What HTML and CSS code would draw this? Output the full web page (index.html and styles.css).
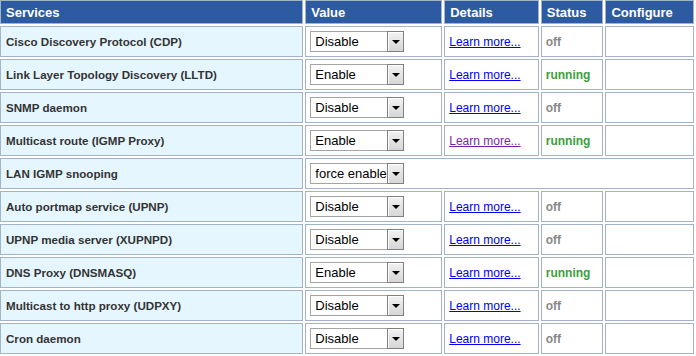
FILE: index.html
```html
<!DOCTYPE html>
<html lang="en">
<head>
    <meta charset="UTF-8">
    <title>Services</title>
    <link rel="stylesheet" href="styles.css">
</head>
<body>
    <table class="services">
        <thead>
            <tr>
                <th class="col-name">Services</th>
                <th class="col-value">Value</th>
                <th class="col-details">Details</th>
                <th class="col-status">Status</th>
                <th class="col-config">Configure</th>
            </tr>
        </thead>
        <tbody>
            <tr>
                <td class="name">Cisco Discovery Protocol (CDP)</td>
                <td><span class="select"><span class="select-text">Disable</span><span class="select-btn"><i></i></span></span></td>
                <td class="details"><a href="#">Learn more...</a></td>
                <td class="status off">off</td>
                <td></td>
            </tr>
            <tr>
                <td class="name">Link Layer Topology Discovery (LLTD)</td>
                <td><span class="select"><span class="select-text">Enable</span><span class="select-btn"><i></i></span></span></td>
                <td class="details"><a href="#">Learn more...</a></td>
                <td class="status on">running</td>
                <td></td>
            </tr>
            <tr>
                <td class="name">SNMP daemon</td>
                <td><span class="select"><span class="select-text">Disable</span><span class="select-btn"><i></i></span></span></td>
                <td class="details"><a href="#">Learn more...</a></td>
                <td class="status off">off</td>
                <td></td>
            </tr>
            <tr>
                <td class="name">Multicast route (IGMP Proxy)</td>
                <td><span class="select"><span class="select-text">Enable</span><span class="select-btn"><i></i></span></span></td>
                <td class="details"><a href="#" class="visited">Learn more...</a></td>
                <td class="status on">running</td>
                <td></td>
            </tr>
            <tr>
                <td class="name">LAN IGMP snooping</td>
                <td colspan="4"><span class="select"><span class="select-text">force enable</span><span class="select-btn"><i></i></span></span></td>
            </tr>
            <tr>
                <td class="name">Auto portmap service (UPNP)</td>
                <td><span class="select"><span class="select-text">Disable</span><span class="select-btn"><i></i></span></span></td>
                <td class="details"><a href="#">Learn more...</a></td>
                <td class="status off">off</td>
                <td></td>
            </tr>
            <tr>
                <td class="name">UPNP media server (XUPNPD)</td>
                <td><span class="select"><span class="select-text">Disable</span><span class="select-btn"><i></i></span></span></td>
                <td class="details"><a href="#">Learn more...</a></td>
                <td class="status off">off</td>
                <td></td>
            </tr>
            <tr>
                <td class="name">DNS Proxy (DNSMASQ)</td>
                <td><span class="select"><span class="select-text">Enable</span><span class="select-btn"><i></i></span></span></td>
                <td class="details"><a href="#">Learn more...</a></td>
                <td class="status on">running</td>
                <td></td>
            </tr>
            <tr>
                <td class="name">Multicast to http proxy (UDPXY)</td>
                <td><span class="select"><span class="select-text">Disable</span><span class="select-btn"><i></i></span></span></td>
                <td class="details"><a href="#">Learn more...</a></td>
                <td class="status off">off</td>
                <td></td>
            </tr>
            <tr>
                <td class="name">Cron daemon</td>
                <td><span class="select"><span class="select-text">Disable</span><span class="select-btn"><i></i></span></span></td>
                <td class="details"><a href="#">Learn more...</a></td>
                <td class="status off">off</td>
                <td></td>
            </tr>
        </tbody>
    </table>
</body>
</html>
```

FILE: styles.css
```css
body {
    margin: 0;
    font-family: "Liberation Sans", Arial, sans-serif;
    background: #fff;
    color: #333;
}
.services {
    border-collapse: separate;
    border-spacing: 2px;
    margin: -2px 0 0 -2px;
}
th,
td {
    border: 1px solid #a3b3c8;
    padding: 0 4px;
    text-align: left;
    white-space: nowrap;
    overflow: hidden;
}
th {
    height: 22px;
    padding: 0 5px;
    background: #2d5ba2;
    color: #fff;
    font-size: 13px;
    font-weight: bold;
}
.col-name { width: 294px; }
.col-value { width: 126px; }
.col-details { width: 83px; }
.col-status { width: 51px; }
.col-config { width: 77px; }
td {
    height: 29px;
    font-size: 12px;
}
td.name {
    padding-left: 5px;
    background: #e6f6ff;
    font-weight: bold;
    font-size: 11.6px;
    color: #333;
}
.details a {
    color: #0000ee;
    text-decoration: underline;
}
.details a.visited {
    color: #7b1fa2;
}
.status {
    font-weight: bold;
}
.status.off {
    color: #888;
}
.status.on {
    color: #3c9f3c;
}
.select {
    display: inline-flex;
    vertical-align: middle;
    box-sizing: border-box;
    width: 94px;
    height: 21px;
    border: 1px solid #a5a5a5;
    background: #fff;
    font-size: 13px;
    color: #000;
}
.select-text {
    flex: 1;
    overflow: hidden;
    padding-left: 4px;
    line-height: 19px;
}
.select-btn {
    display: flex;
    align-items: center;
    justify-content: center;
    box-sizing: border-box;
    width: 17px;
    flex-shrink: 0;
    margin: -1px -1px -1px 0;
    border: 1px solid #808080;
    background: linear-gradient(#f2f2f2, #d6d6d6);
    box-shadow: inset 1px 1px 0 #fff;
}
.select-btn i {
    width: 0;
    height: 0;
    border-left: 4px solid transparent;
    border-right: 4px solid transparent;
    border-top: 4px solid #000;
}
```
